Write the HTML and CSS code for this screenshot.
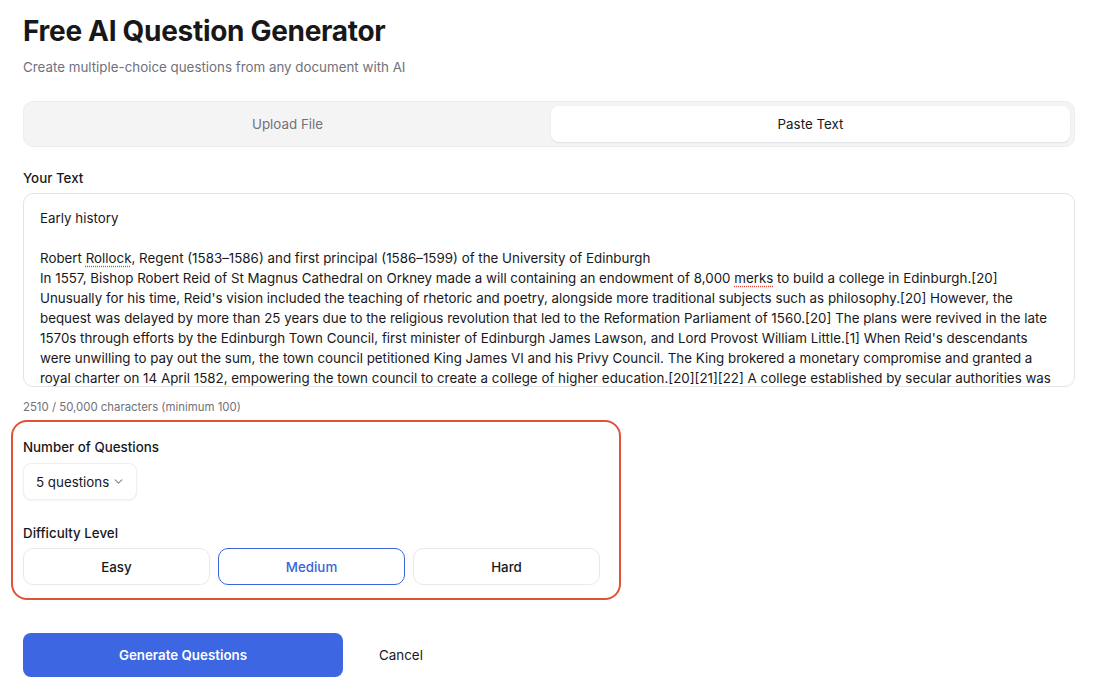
FILE: index.html
```html
<!DOCTYPE html>
<html lang="en">
<head>
<meta charset="utf-8">
<title>Free AI Question Generator</title>
<link rel="stylesheet" href="styles.css">
</head>
<body>
<main class="page">
  <header class="head">
    <h1 class="title">Free AI Question Generator</h1>
    <p class="subtitle">Create multiple-choice questions from any document with AI</p>
  </header>

  <div class="tabs">
    <button class="tab">Upload File</button>
    <button class="tab tab-active">Paste Text</button>
  </div>

  <section class="field">
    <label class="label">Your Text</label>
    <div class="textarea"><p>Early history</p><p class="blank"></p><p>Robert <span class="spell">Rollock</span>, Regent (1583–1586) and first principal (1586–1599) of the University of Edinburgh</p><p>In 1557, Bishop Robert Reid of St Magnus Cathedral on Orkney made a will containing an endowment of 8,000 <span class="spell">merks</span> to build a college in Edinburgh.[20] Unusually for his time, Reid's vision included the teaching of rhetoric and poetry, alongside more traditional subjects such as philosophy.[20] However, the bequest was delayed by more than 25 years due to the religious revolution that led to the Reformation Parliament of 1560.[20] The plans were revived in the late 1570s through efforts by the Edinburgh Town Council, first minister of Edinburgh James Lawson, and Lord Provost William Little.[1] When Reid's descendants were unwilling to pay out the sum, the town council petitioned King James VI and his Privy Council. The King brokered a monetary compromise and granted a royal charter on 14 April 1582, empowering the town council to create a college of higher education.[20][21][22] A college established by secular authorities was unprecedented in Scotland at the time.</p></div>
    <p class="hint">2510 / 50,000 characters (minimum 100)</p>
  </section>

  <section class="settings">
    <div class="setting">
      <label class="label">Number of Questions</label>
      <button class="select">5 questions
        <svg class="chev" width="11" height="11" viewBox="0 0 10 10"><path d="M2 3.5 L5 6.5 L8 3.5" fill="none" stroke="#8a8a8a" stroke-width="1" stroke-linecap="round" stroke-linejoin="round"/></svg>
      </button>
    </div>
    <div class="setting">
      <label class="label">Difficulty Level</label>
      <div class="levels">
        <button class="level">Easy</button>
        <button class="level level-active">Medium</button>
        <button class="level">Hard</button>
      </div>
    </div>
  </section>

  <div class="actions">
    <button class="primary">Generate Questions</button>
    <button class="ghost">Cancel</button>
  </div>
</main>
</body>
</html>
```

FILE: styles.css
```css
* { box-sizing: border-box; }
html, body { margin: 0; padding: 0; background: #ffffff; }
body {
  font-family: Inter, "Liberation Sans", Arial, sans-serif;
  color: #1a1a1a;
  -webkit-font-smoothing: antialiased;
}
button { font-family: inherit; cursor: pointer; }

.page {
  width: 1052px;
  margin-left: 23px;
  padding-top: 14px;
}

.title {
  margin: 0;
  font-size: 28px;
  line-height: 34px;
  font-weight: 700;
  letter-spacing: -0.3px;
  color: #18181b;
}
.subtitle {
  margin: 9px 0 0;
  font-size: 13.35px;
  line-height: 20px;
  color: #71717a;
}

.tabs {
  margin-top: 24px;
  height: 46px;
  background: #f4f4f5;
  border: 1px solid #ededed;
  border-radius: 10px;
  padding: 4px;
  display: flex;
  gap: 4px;
}
.tab {
  flex: 1;
  border: 0;
  background: transparent;
  font-size: 13.35px;
  color: #71717a;
  border-radius: 8px;
}
.tab-active {
  background: #ffffff;
  color: #18181b;
  box-shadow: 0 1px 2px rgba(0,0,0,0.08);
}

.field { margin-top: 21px; }
.label {
  display: block;
  font-size: 13.35px;
  line-height: 20px;
  font-weight: 500;
  color: #18181b;
}
.textarea {
  margin-top: 5px;
  height: 194px;
  border: 1px solid #e4e4e7;
  border-radius: 10px;
  padding: 14px 16px 13px;
  overflow: hidden;
  font-size: 13.35px;
  line-height: 20px;
  color: #18181b;
}
.textarea p { margin: 0; }
.textarea .blank { height: 20px; }
.spell {
  text-decoration: underline dotted #e0453a;
  text-underline-offset: 3px;
}
.hint {
  margin: 12px 0 0;
  font-size: 11.4px;
  line-height: 16px;
  color: #71717a;
}

.settings {
  margin-top: 5px;
  margin-left: -12px;
  width: 610px;
  border: 2px solid #e2513a;
  border-radius: 16px;
  padding: 15px 10px 13px;
  display: flex;
  flex-direction: column;
  gap: 23px;
}
.select {
  margin-top: 6px;
  height: 37px;
  padding: 0 12px;
  display: inline-flex;
  align-items: center;
  gap: 4px;
  background: #fff;
  border: 1px solid #efefef;
  border-radius: 8px;
  box-shadow: 0 1px 2px rgba(0,0,0,0.05);
  font-size: 13.35px;
  color: #18181b;
}
.levels {
  margin-top: 5px;
  display: flex;
  gap: 8px;
}
.level {
  width: 187px;
  height: 37px;
  background: #fff;
  border: 1px solid #e9e9ec;
  border-radius: 10px;
  font-size: 13.35px;
  font-weight: 500;
  color: #18181b;
}
.level-active {
  border-color: #3b64d8;
  color: #3b64d8;
}

.actions {
  margin-top: 33px;
  display: flex;
  align-items: center;
  gap: 16px;
}
.primary {
  width: 320px;
  height: 44px;
  border: 0;
  border-radius: 8px;
  background: #3c66e2;
  color: #fff;
  font-size: 13.35px;
  font-weight: 600;
}
.ghost {
  width: 84px;
  height: 44px;
  border: 0;
  background: transparent;
  font-size: 13.35px;
  color: #18181b;
}
```
